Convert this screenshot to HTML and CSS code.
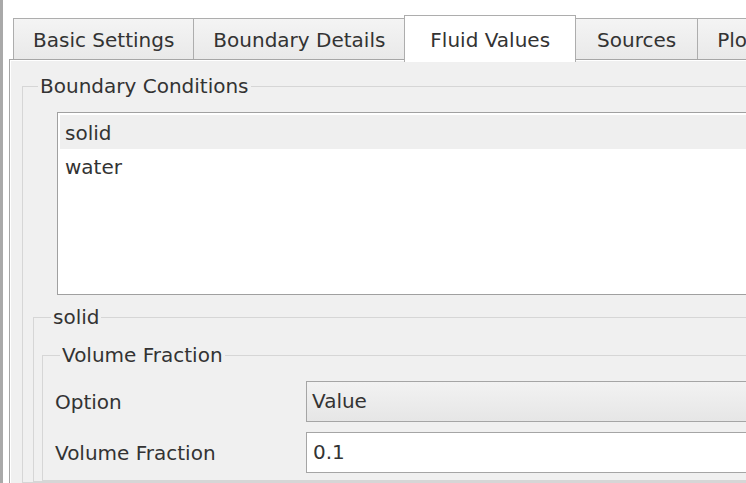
FILE: index.html
```html
<!DOCTYPE html>
<html lang="en">
<head>
    <meta charset="UTF-8">
    <title>Fluid Values</title>
    <link rel="stylesheet" href="styles.css">
</head>
<body>
    <div class="window">
        <div class="tab-bar">
            <div class="tab">Basic Settings</div>
            <div class="tab">Boundary Details</div>
            <div class="tab active">Fluid Values</div>
            <div class="tab tab-narrow">Sources</div>
            <div class="tab">Plots</div>
        </div>

        <div class="tab-page">
            <fieldset class="group group-bc">
                <legend>Boundary Conditions</legend>
                <ul class="list">
                    <li class="selected">solid</li>
                    <li>water</li>
                </ul>

                <fieldset class="group group-solid">
                    <legend>solid</legend>
                    <fieldset class="group group-vf">
                        <legend>Volume Fraction</legend>
                        <div class="form">
                            <label>Option</label>
                            <div class="combo">Value</div>
                            <label>Volume Fraction</label>
                            <div class="line-edit">0.1</div>
                        </div>
                    </fieldset>
                </fieldset>
            </fieldset>
        </div>
    </div>
</body>
</html>
```

FILE: styles.css
```css
html, body {
    margin: 0;
    height: 100%;
    overflow: hidden;
    background: #fff;
}

body {
    font-family: 'DejaVu Sans', Verdana, sans-serif;
    font-size: 20px;
    color: #333;
}

.window {
    width: 900px;
    height: 100%;
    box-sizing: border-box;
    border-left: 3px solid #a9a9a9;
    padding: 15px 0 0 6px;
}

/* tabs */
.tab-bar {
    display: flex;
    align-items: flex-start;
    margin: 0 0 -3px 4px;
    position: relative;
    z-index: 1;
}

.tab {
    box-sizing: border-box;
    height: 41px;
    margin-top: 3px;
    margin-left: -1px;
    padding: 1px 19px 0;
    line-height: 40px;
    white-space: nowrap;
    border: 1px solid #adadad;
    border-bottom: none;
    background: linear-gradient(#f4f4f4, #e9e9e9);
}

.tab:first-child {
    margin-left: 0;
}

.tab-narrow {
    padding: 1px 21px 0;
}

.tab.active {
    height: 47px;
    margin-top: 0;
    padding: 4px 25px 2px;
    background: #fff;
    position: relative;
    z-index: 2;
}

.tab-page {
    border-top: 1px solid #a6a6a6;
    border-left: 1px solid #a6a6a6;
    box-shadow: inset 1px 1px 0 #fff;
    background: #f0f0f0;
    padding: 14px 0 0 12px;
    height: 100%;
    box-sizing: border-box;
}

/* group boxes */
.group {
    margin: 0;
    border: 1px solid #d6d6d6;
    border-right: none;
    padding: 0;
}

.group legend {
    padding: 0 2px;
    line-height: 24px;
}

.group-bc {
    padding-left: 10px;
}

.group-bc > legend {
    margin-left: 5px;
}

.group-solid {
    margin-top: 10px;
    padding-left: 8px;
}

.group-solid > legend {
    margin-left: 9px;
}

.group-vf {
    margin-top: 14px;
    padding: 14px 0 7px 12px;
}

.group-vf > legend {
    margin-left: 5px;
}

/* list widget */
.list {
    list-style: none;
    margin: 14px 0 0 24px;
    padding: 2px;
    height: 183px;
    box-sizing: border-box;
    background: #fff;
    border: 1px solid #a0a0a0;
    border-right: none;
}

.list li {
    height: 34px;
    line-height: 36px;
    padding-left: 5px;
}

.list li.selected {
    background: #efefef;
}

/* form rows */
.form {
    display: grid;
    grid-template-columns: 251px 1fr;
    row-gap: 10px;
    align-items: center;
}

.combo,
.line-edit {
    box-sizing: border-box;
    height: 41px;
    line-height: 39px;
    border: 1px solid #a5a5a5;
    border-right: none;
}

.combo {
    padding-left: 5px;
    background: linear-gradient(#f2f2f2, #e6e6e6);
}

.line-edit {
    padding-left: 6px;
    background: #fff;
}
```
